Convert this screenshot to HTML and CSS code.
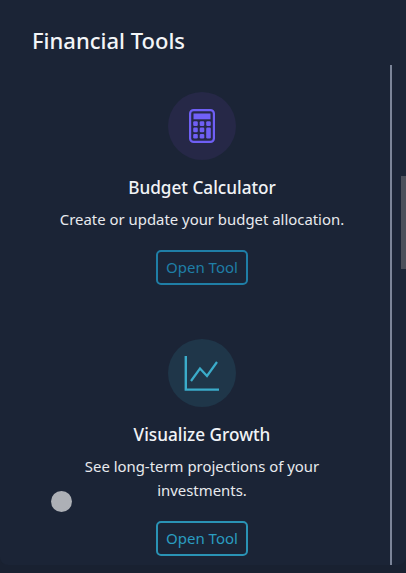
FILE: index.html
```html
<!DOCTYPE html>
<html lang="en">
<head>
<meta charset="utf-8">
<title>Financial Tools</title>
<link rel="stylesheet" href="styles.css">
</head>
<body>
<main class="panel">
  <h1 class="panel-title">Financial Tools</h1>
  <section class="tool">
    <div class="tool-icon tool-icon-purple">
      <svg width="26" height="34" viewBox="0 0 26 34" fill="none">
        <rect x="1.1" y="1.1" width="23.8" height="31.8" rx="3.5" stroke="#6f5ff5" stroke-width="2.2"/>
        <rect x="4.5" y="4.5" width="17" height="5.8" fill="#7161f7"/>
        <g fill="#6f5ff5">
          <rect x="4.2" y="12.3" width="4.6" height="4.6" rx="1.2"/><rect x="10.7" y="12.3" width="4.6" height="4.6" rx="1.2"/><rect x="17.2" y="12.3" width="4.6" height="4.6" rx="1.2"/>
          <rect x="4.2" y="18.6" width="4.6" height="4.6" rx="1.2"/><rect x="10.7" y="18.6" width="4.6" height="4.6" rx="1.2"/><rect x="17.2" y="18.6" width="4.6" height="10.9" rx="1.2"/>
          <rect x="4.2" y="24.9" width="4.6" height="4.6" rx="1.2"/><rect x="10.7" y="24.9" width="4.6" height="4.6" rx="1.2"/>
        </g>
      </svg>
    </div>
    <h2 class="tool-name">Budget Calculator</h2>
    <p class="tool-desc">Create or update your budget allocation.</p>
    <a class="tool-btn tool-btn-dim">Open Tool</a>
  </section>
  <section class="tool">
    <div class="tool-icon tool-icon-teal">
      <svg width="36" height="36" viewBox="0 0 36 36" fill="none" stroke="#3bacca" stroke-linejoin="miter">
        <path d="M1.8 1V34.6H35" stroke-width="2.4"/>
        <path d="M7 26L16 13.5L23 21L33 7" stroke-width="2.2"/>
      </svg>
    </div>
    <h2 class="tool-name">Visualize Growth</h2>
    <p class="tool-desc">See long-term projections of your investments.</p>
    <a class="tool-btn">Open Tool</a>
  </section>
  <div class="track-line"></div>
  <div class="thumb"></div>
  <div class="touch-dot"></div>
</main>
</body>
</html>
```
FILE: styles.css
```css
* { box-sizing: border-box; }
html, body { margin: 0; height: 100%; }
body {
  background: #192131;
  font-family: "Noto Sans", "Open Sans", sans-serif;
  overflow: hidden;
}
.panel {
  position: relative;
  width: 406px;
  height: 565px;
  background: #1b2436;
  border-radius: 0 0 8px 8px;
  padding: 26px 0 0;
  display: flex;
  flex-direction: column;
  overflow: hidden;
}
.panel-title {
  margin: 0 0 38px 32px;
  font-size: 22px;
  line-height: 28px;
  font-weight: 500;
  color: #f3f5f8;
}
.tool {
  width: 404px;
  display: flex;
  flex-direction: column;
  align-items: center;
  text-align: center;
  margin-bottom: 54px;
}
.tool-icon {
  width: 68px;
  height: 68px;
  border-radius: 50%;
  display: flex;
  align-items: center;
  justify-content: center;
}
.tool-icon-purple { background: #262847; }
.tool-icon-teal { background: #1f3649; }
.tool-name {
  margin: 16px 0 0;
  font-size: 17.2px;
  line-height: 24px;
  font-weight: 500;
  color: #f1f3f6;
}
.tool-desc {
  margin: 7px 0 0;
  width: 300px;
  font-size: 14.9px;
  line-height: 24px;
  color: #e8eaee;
}
.tool-btn {
  margin-top: 19px;
  width: 92px;
  height: 35px;
  border: 2px solid #2a93b5;
  border-radius: 5px;
  color: #2a9cc0;
  font-size: 15px;
  line-height: 31px;
}
.tool-btn-dim { border-color: #1f7ea6; color: #1f7ea6; }
.track-line {
  position: absolute;
  left: 390px;
  top: 65px;
  bottom: 0;
  width: 2px;
  background: #7b8498;
}
.thumb {
  position: absolute;
  right: 0;
  top: 176px;
  width: 5px;
  height: 93px;
  background: #4b4f5b;
}
.touch-dot {
  position: absolute;
  left: 51px;
  top: 491px;
  width: 21px;
  height: 21px;
  border-radius: 50%;
  background: #adb0b6;
}
```
